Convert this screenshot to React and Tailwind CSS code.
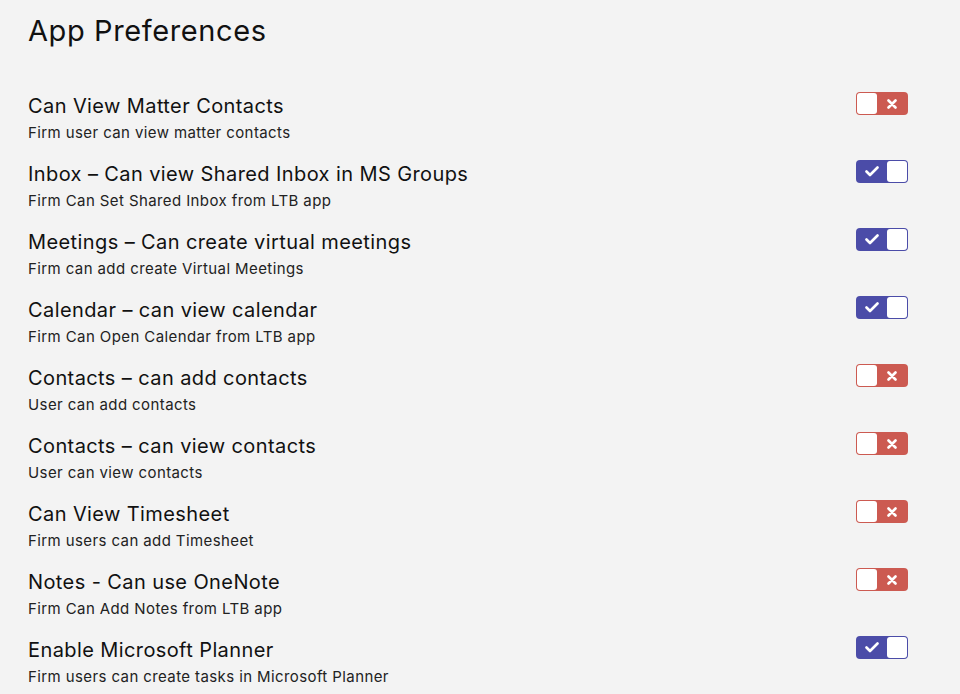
import React, { useState } from 'react';

const prefs = [
  { title: 'Can View Matter Contacts', desc: 'Firm user can view matter contacts', on: false },
  { title: 'Inbox – Can view Shared Inbox in MS Groups', desc: 'Firm Can Set Shared Inbox from LTB app', on: true },
  { title: 'Meetings – Can create virtual meetings', desc: 'Firm can add create Virtual Meetings', on: true },
  { title: 'Calendar – can view calendar', desc: 'Firm Can Open Calendar from LTB app', on: true },
  { title: 'Contacts – can add contacts', desc: 'User can add contacts', on: false },
  { title: 'Contacts – can view contacts', desc: 'User can view contacts', on: false },
  { title: 'Can View Timesheet', desc: 'Firm users can add Timesheet', on: false },
  { title: 'Notes - Can use OneNote', desc: 'Firm Can Add Notes from LTB app', on: false },
  { title: 'Enable Microsoft Planner', desc: 'Firm users can create tasks in Microsoft Planner', on: true },
];

const Toggle = ({ on, onClick }) => (
  <button
    onClick={onClick}
    className={`flex items-center w-[52px] h-[23px] rounded-[4px] p-px ${
      on ? 'bg-[#4b4ca8] flex-row-reverse' : 'bg-[#cc5a51]'
    }`}
  >
    <span className="w-[20px] h-[21px] rounded-[3px] bg-white" />
    <span className="flex-1 flex items-center justify-center text-white">
      {on ? (
        <svg width="14" height="11" viewBox="0 0 14 11">
          <path d="M1.5 5.5l3.5 3.5 7.5-7.5" fill="none" stroke="white" strokeWidth="2.6" strokeLinecap="round" strokeLinejoin="round" />
        </svg>
      ) : (
        <svg width="10" height="10" viewBox="0 0 10 10">
          <path d="M1.5 1.5l7 7M8.5 1.5l-7 7" fill="none" stroke="white" strokeWidth="2.6" strokeLinecap="round" />
        </svg>
      )}
    </span>
  </button>
);

export default function App() {
  const [items, setItems] = useState(prefs);

  const flip = (i) =>
    setItems(items.map((p, j) => (j === i ? { ...p, on: !p.on } : p)));

  return (
    <div
      className="min-h-screen bg-[#f3f3f3] text-[#111] pl-[28px] pr-[52px] pt-[13px]"
      style={{ fontFamily: 'Inter, "Noto Sans", sans-serif' }}
    >
      <h1 className="text-[29px] leading-[36px] font-normal tracking-[0.6px]">App Preferences</h1>
      <div className="mt-[43px] flex flex-col">
        {items.map((p, i) => (
          <div key={p.title} className="flex items-start justify-between h-[68px]">
            <div className="pt-[1px]">
              <div className="text-[20px] leading-[26px] tracking-[0.4px]">{p.title}</div>
              <div className="text-[15px] leading-[20px] mt-[4px] tracking-[0.4px] text-[#222]">{p.desc}</div>
            </div>
            <Toggle on={p.on} onClick={() => flip(i)} />
          </div>
        ))}
      </div>
    </div>
  );
}
